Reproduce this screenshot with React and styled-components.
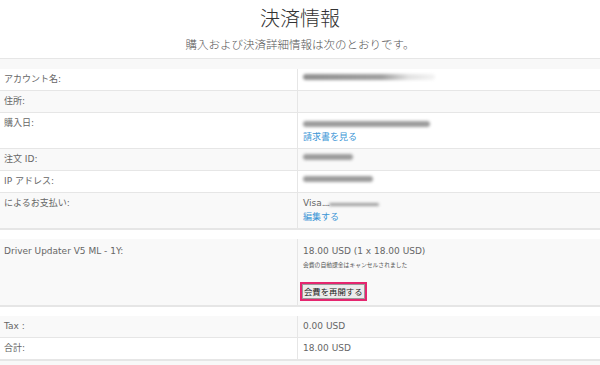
import React from 'react';
import styled, { createGlobalStyle } from 'styled-components';

const GlobalStyle = createGlobalStyle`
  html, body {
    margin: 0;
    padding: 0;
    background: #ffffff;
  }
  body {
    font-family: "DejaVu Sans", "Noto Sans CJK JP", sans-serif;
    color: #666666;
  }
`;

const Page = styled.div`
  width: 600px;
  display: flex;
  flex-direction: column;
`;

const Header = styled.div`
  display: flex;
  flex-direction: column;
  align-items: center;
  padding-top: 5px;
  height: 53px;
`;

const Title = styled.h1`
  margin: 0;
  font-family: "Noto Sans CJK JP", sans-serif;
  font-weight: 300;
  font-size: 20px;
  line-height: 26px;
  color: #333333;
`;

const Subtitle = styled.p`
  margin: 6px 0 0;
  font-family: "Noto Sans CJK JP", sans-serif;
  font-weight: 300;
  font-size: 11.5px;
  line-height: 14px;
  color: #555555;
`;

const Band = styled.div`
  height: ${(p) => p.$h}px;
  background: ${(p) => (p.$shade ? '#f8f8f8' : '#ffffff')};
  border-top: 1px solid #e6e6e6;
  border-bottom: ${(p) => (p.$open ? 'none' : '1px solid #e6e6e6')};
  margin-bottom: ${(p) => (p.$open ? 0 : -1)}px;
`;

const Row = styled.div`
  display: grid;
  grid-template-columns: 298px 1fr;
  background: ${(p) => (p.$shade ? '#f9f9f9' : '#ffffff')};
  border-bottom: 1px solid #e6e6e6;
  font-size: 9px;
  line-height: 13px;
`;

const Label = styled.div`
  padding: ${(p) => p.$top || 4}px 4px 4px;
  border-right: 1px solid #e6e6e6;
  color: #666666;
`;

const Value = styled.div`
  padding: ${(p) => p.$top || 4}px 5px 4px;
  display: flex;
  flex-direction: column;
  align-items: flex-start;
  min-height: 13px;
  color: #666666;
`;

const Line = styled.div`
  display: flex;
  align-items: center;
  height: 13px;
`;

const Dots = styled.span`
  letter-spacing: -1px;
`;

const Blur = styled.span`
  display: inline-block;
  height: ${(p) => (p.$thin ? 3 : 6)}px;
  width: ${(p) => p.$w}px;
  margin-top: 1px;
  border-radius: 3px;
  background: ${(p) =>
    p.$fade
      ? 'linear-gradient(90deg, #8f8f8f 0%, #a0a0a0 60%, #e2e2e2 80%, #f4f4f4 100%)'
      : '#9c9c9c'};
  filter: blur(1.6px);
`;

const Link = styled.a`
  color: #3a95d6;
  text-decoration: none;
  cursor: pointer;
  line-height: 14px;
`;

const Note = styled.div`
  font-family: "Noto Sans CJK JP", sans-serif;
  font-size: 5.8px;
  line-height: 12px;
  margin-top: 1px;
  color: #555555;
`;

const Highlight = styled.div`
  margin-top: 11px;
  margin-left: -3px;
  border: 2px solid #e5266f;
  display: flex;
`;

const ResumeButton = styled.button`
  font-family: "Noto Sans CJK JP", sans-serif;
  font-size: 8.4px;
  line-height: 11px;
  padding: 1px 1px;
  margin: 0;
  background: #ececec;
  border: 1px solid #9a9a9a;
  color: #222222;
  cursor: pointer;
`;

const rows = [
  { label: 'アカウント名:', value: <Blur $w={132} $fade />, shade: false },
  { label: '住所:', value: null, shade: true },
  {
    label: '購入日:',
    value: (
      <>
        <Line><Blur $w={127} /></Line>
        <Link>請求書を見る</Link>
      </>
    ),
    shade: false,
  },
  { label: '注文 ID:', value: <Blur $w={50} />, shade: true },
  { label: 'IP アドレス:', value: <Blur $w={70} />, shade: false },
  {
    label: 'によるお支払い:',
    value: (
      <>
        <Line>Visa<Dots>....</Dots><Blur $w={50} $thin /></Line>
        <Link>編集する</Link>
      </>
    ),
    shade: true,
  },
];

const totals = [
  { label: 'Tax :', value: '0.00 USD', shade: true },
  { label: '合計:', value: '18.00 USD', shade: false },
];

export default function App() {
  return (
    <>
      <GlobalStyle />
      <Page>
        <Header>
          <Title>決済情報</Title>
          <Subtitle>購入および決済詳細情報は次のとおりです。</Subtitle>
        </Header>
        <Band $shade $h={10} />
        {rows.map((r) => (
          <Row key={r.label} $shade={r.shade}>
            <Label>{r.label}</Label>
            <Value>{r.value}</Value>
          </Row>
        ))}
        <Band $h={9} />
        <Row $shade>
          <Label $top={6}>Driver Updater V5 ML - 1Y:</Label>
          <Value $top={6}>
            <Line>18.00 USD (1 x 18.00 USD)</Line>
            <Note>会費の自動課金はキャンセルされました</Note>
            <Highlight>
              <ResumeButton type="button">会費を再開する</ResumeButton>
            </Highlight>
          </Value>
        </Row>
        <Band $h={9} />
        {totals.map((r) => (
          <Row key={r.label} $shade={r.shade}>
            <Label>{r.label}</Label>
            <Value>{r.value}</Value>
          </Row>
        ))}
        <Band $shade $h={6} $open />
      </Page>
    </>
  );
}
